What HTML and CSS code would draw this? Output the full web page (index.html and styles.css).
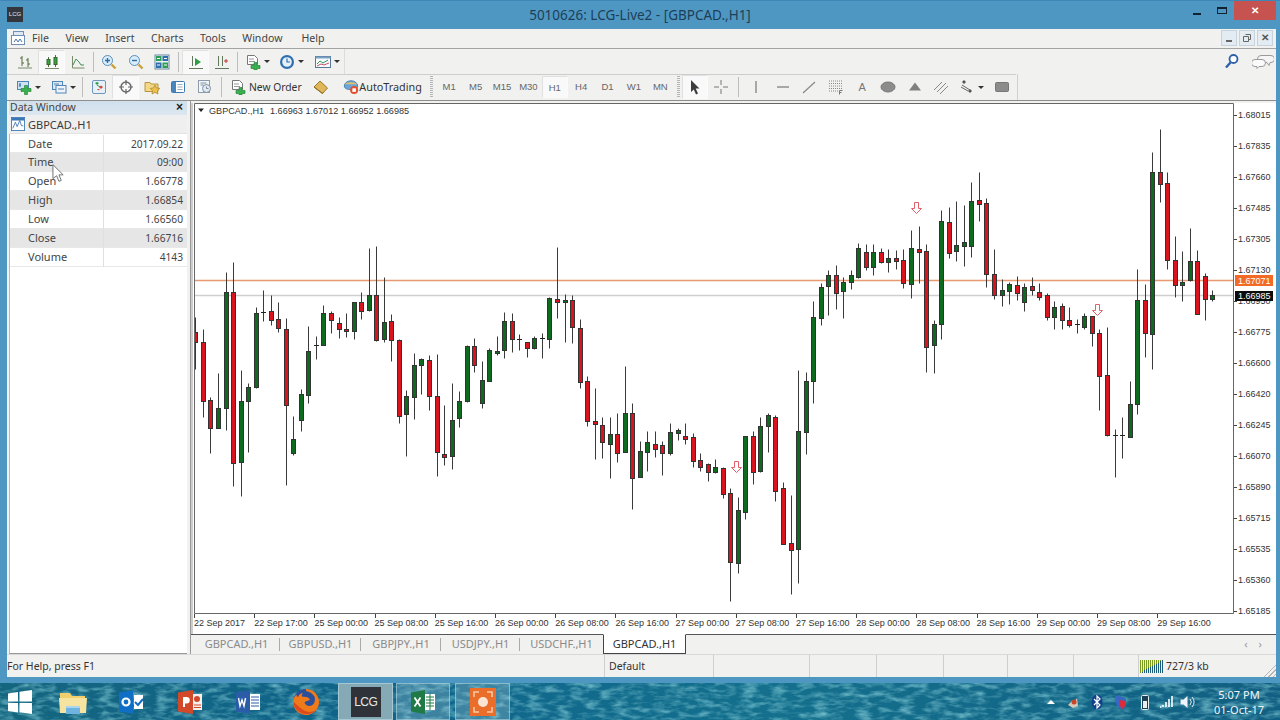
FILE: index.html
```html
<!DOCTYPE html>
<html lang="en">
<head>
<meta charset="utf-8">
<title>5010626: LCG-Live2 - [GBPCAD.,H1]</title>
<link rel="stylesheet" href="styles.css">
</head>
<body>
<div class="screen">
  <div class="window">
    <header class="titlebar">
      <span class="applogo">LCG</span>
      <span class="apptitle">5010626: LCG-Live2 - [GBPCAD.,H1]</span>
      <div class="winctl">
        <span class="wmin"></span>
        <span class="wmax"></span>
        <span class="wclose">✕</span>
      </div>
    </header>

    <nav class="menubar">
      <svg class="menuicon" viewBox="0 0 16 16"><rect x="3.5" y="1.5" width="10" height="8" fill="#dfe9f5" stroke="#6f8fb5"/><rect x="1.5" y="5.5" width="13" height="9" fill="#fff" stroke="#6f8fb5"/><path d="M4 12l2-3 2 3 2-3 2 3" fill="none" stroke="#4a76a8"/></svg>
      <span>File</span><span>View</span><span>Insert</span><span>Charts</span><span>Tools</span><span class="mwin">Window</span><span>Help</span>
      <div class="mdictl">
        <span class="mdi"><i class="mdimin"></i></span>
        <span class="mdi"><svg viewBox="0 0 10 10" width="10" height="10"><path d="M3.5 1.5h5v5h-2M1.5 3.5h5v5h-5z" fill="none" stroke="#666"/></svg></span>
        <span class="mdi mdix">✕</span>
      </div>
    </nav>

    <div class="tbrow tbrow1">
      <div class="tbgroup g1">
        <button class="tb"><svg viewBox="0 0 16 16"><path d="M1 14h14" stroke="#7a8a6a"/><path d="M5 2v10M3 4h2M5 9h2M11 4v9M9 6h2M11 10h2" stroke="#556b3a" fill="none"/></svg></button>
        <button class="tb on"><svg viewBox="0 0 16 16"><path d="M1 14.5h14" stroke="#7a8a6a"/><path d="M4.5 3v10M11.5 1v12" stroke="#556b3a"/><rect x="3" y="5.5" width="3" height="5" fill="#3da13d" stroke="#2c6b2c"/><rect x="10" y="3.5" width="3" height="7" fill="#3da13d" stroke="#2c6b2c"/></svg></button>
        <button class="tb"><svg viewBox="0 0 16 16"><path d="M2.5 2v12h12" stroke="#7a8a6a" fill="none"/><path d="M3 11l3-6 3 3 2 3h3" stroke="#3d8f55" fill="none"/></svg></button>
        <i class="sep"></i>
        <button class="tb"><svg viewBox="0 0 16 16"><circle cx="6.5" cy="6.5" r="5" fill="#d9ecfa" stroke="#5a8fb8"/><path d="M4 6.5h5M6.5 4v5" stroke="#2c6ea5" stroke-width="1.4"/><path d="M10.5 10.5l4 4" stroke="#c9a23c" stroke-width="2.4"/></svg></button>
        <button class="tb"><svg viewBox="0 0 16 16"><circle cx="6.5" cy="6.5" r="5" fill="#d9ecfa" stroke="#5a8fb8"/><path d="M4 6.5h5" stroke="#2c6ea5" stroke-width="1.4"/><path d="M10.5 10.5l4 4" stroke="#c9a23c" stroke-width="2.4"/></svg></button>
        <button class="tb"><svg viewBox="0 0 16 16"><rect x="1" y="1" width="14" height="14" fill="#eef4f4" stroke="#6a8aa0"/><rect x="2" y="2" width="5.500" height="5" fill="#2f9e58"/><rect x="8.500" y="2" width="5.500" height="5" fill="#2f6fae"/><rect x="2" y="8.500" width="5.500" height="5.500" fill="#2f6fae"/><rect x="8.500" y="8.500" width="5.500" height="5.500" fill="#2f9e58"/><path d="M3 4.500h3M10 4.500h3M3 11h3M10 11h3" stroke="#fff"/></svg></button>
        <i class="sep sepw"></i>
        <button class="tb on"><svg viewBox="0 0 16 16"><path d="M1 14.500h14M4.500 2v10" stroke="#63775a" fill="none"/><path d="M7 4l6 4-6 4z" fill="#2ea043"/></svg></button>
        <button class="tb"><svg viewBox="0 0 16 16"><path d="M1 14.500h14M4.500 2v10M8.500 2v10" stroke="#63775a" fill="none"/><path d="M10 7h4M12 5v4" stroke="#c0392b"/></svg></button>
        <i class="sep"></i>
        <button class="tb dd d34"><svg viewBox="0 0 16 16"><path d="M2.500 1.500h7l3 3v6h-10z" fill="#fff" stroke="#777"/><path d="M4 5h5M4 7.500h6" stroke="#999"/><path d="M9 8.500h3v3h3v3h-3v1.500h-3v-1.500h-3v-3h3z" fill="#37b24d" stroke="#1f7a30" stroke-width=".6"/></svg><b class="caret"></b></button>
        <button class="tb dd d36"><svg viewBox="0 0 16 16"><circle cx="8" cy="8" r="7" fill="#2e6fb0"/><circle cx="8" cy="8" r="4.800" fill="#e6f0f8"/><path d="M8 4.500v3.500h3" stroke="#2e6fb0" fill="none" stroke-width="1.200"/></svg><b class="caret"></b></button>
        <button class="tb dd d34"><svg viewBox="0 0 16 16"><rect x=".5" y="2.500" width="15" height="11" fill="#fafbfd" stroke="#557799"/><path d="M.5 2.500h15v2h-15z" fill="#7aa0c4"/><path d="M2 10l3-3 3 2 5-3" stroke="#2d9a5a" fill="none"/><path d="M2 12l4-2 3 1 5-2" stroke="#c0506a" fill="none"/></svg><b class="caret"></b></button>
      </div>
      <div class="tbright">
        <svg class="ic" viewBox="0 0 16 16"><circle cx="9.500" cy="6" r="4" fill="#fff" stroke="#2e62a8" stroke-width="1.800"/><path d="M6.500 9.500l-4.500 5" stroke="#2e62a8" stroke-width="2.400"/></svg>
        <svg class="chat" viewBox="0 0 22 16"><path d="M9 2.500h10a2 2 0 0 1 0 7h-1l-1 3-2-3H9a2 2 0 0 1 0-7z" fill="#f5f5f5" stroke="#9a9a9a"/><path d="M3 6.500h7a2 2 0 0 1 0 7H7l-2 2v-2H3a2 2 0 0 1 0-7z" fill="#fbfbfb" stroke="#9a9a9a"/></svg>
      </div>
    </div>

    <div class="tbrow tbrow2">
      <div class="tbgroup g2">
        <button class="tb dd d35"><svg viewBox="0 0 16 16"><rect x="1.500" y="2.500" width="11" height="8" fill="#cfe2f3" stroke="#4f86b8"/><path d="M3 6h2M4 4v4" stroke="#2c6ea5"/><path d="M8.500 6.500h3v3h3.500v3h-3.500v3h-3v-3h-3.500v-3h3.500z" fill="#37b24d" stroke="#1f7a30" stroke-width=".6"/></svg><b class="caret"></b></button>
        <button class="tb dd d34"><svg viewBox="0 0 16 16"><rect x="1.500" y="2.500" width="10" height="8" fill="#dce9f5" stroke="#4f86b8"/><rect x="5" y="6.500" width="10" height="7.500" fill="#eef4fb" stroke="#4f86b8"/><path d="M3 5h5M7 10h6" stroke="#5a7fa8"/></svg><b class="caret"></b></button>
        <i class="sep sepm"></i>
        <button class="tb"><svg viewBox="0 0 16 16"><rect x="1.500" y="1.500" width="13" height="13" rx="1.500" fill="#e7f0f8" stroke="#6f97bb"/><path d="M4 4l2 2 2-2-2-1z" fill="#2e9a45"/><path d="M8 8l2 2 2-2-2-1.500z" fill="#d24a3a"/><path d="M6 10l1.500 1.500L9 10z" fill="#d24a3a"/><path d="M6 6l3 2" stroke="#2e9a45"/></svg></button>
        <button class="tb on"><svg viewBox="0 0 16 16"><circle cx="8" cy="8" r="5" fill="none" stroke="#666" stroke-width="1.400"/><path d="M8 1v5M8 10v5M1 8h5M10 8h5" stroke="#666" stroke-width="1.200"/></svg></button>
        <button class="tb"><svg viewBox="0 0 16 16"><path d="M1 3.500h5l1 1.500h7v7.500h-13z" fill="#f3d785" stroke="#b8963f"/><path d="M11 6l1.500 3 3.300.400-2.400 2.300.600 3.300-3-1.600-3 1.600.600-3.300L6.200 9.400l3.300-.4z" fill="#eec24a" stroke="#a68430" stroke-width=".7"/></svg></button>
        <button class="tb"><svg viewBox="0 0 16 16"><rect x="1.500" y="2.500" width="13" height="11" rx="1" fill="#fff" stroke="#3f78ad"/><rect x="2" y="3" width="4" height="10" fill="#4a85bd"/><path d="M7.500 5.500h5M7.500 8h5M7.500 10.500h5" stroke="#9ab"/></svg></button>
        <button class="tb"><svg viewBox="0 0 16 16"><rect x="1.500" y="1.500" width="11" height="12" fill="#f4f7fa" stroke="#8a9bad"/><circle cx="9.500" cy="9.500" r="4" fill="#dfeaf3" stroke="#7f8f9f"/><path d="M9.500 7.500v2h2M3.500 4h6M3.500 6h3" stroke="#7f8f9f" fill="none"/></svg></button>
        <i class="sep sepw"></i>
        <button class="tb tbtext nom"><svg viewBox="0 0 16 16"><path d="M2.500 1.500h7l3 3v6h-10z" fill="#fff" stroke="#777"/><path d="M4 5h5M4 7.500h6" stroke="#999"/><path d="M9 8.500h3v3h3v3h-3v1.500h-3v-1.500h-3v-3h3z" fill="#37b24d" stroke="#1f7a30" stroke-width=".6"/></svg><span>New Order</span></button>
        <button class="tb"><svg viewBox="0 0 16 16"><path d="M7 2l7.500 7-5 5.500L1 8z" fill="#e0b65a" stroke="#9a7a2c"/><path d="M1 8l8.500 6.500 1-1.500" fill="none" stroke="#8a6a20"/></svg></button>
        <button class="tb tbtext auto"><svg viewBox="0 0 18 18"><path d="M1.500 8a7.500 6 0 0 1 15 0c0 3-4 4-7.500 4S1.500 11 1.500 8z" fill="#6aa6d8" stroke="#3f78ad"/><path d="M2 6c2-3 12-3 14 0" fill="#e7c265"/><circle cx="12.500" cy="12.500" r="4.500" fill="#e0512f"/><rect x="10.500" y="10.500" width="4" height="4" fill="#fff"/></svg><span>AutoTrading</span></button>
      </div>
      <i class="grip"></i>
      <div class="tfs">
        <button class="tf">M1</button><button class="tf">M5</button><button class="tf">M15</button><button class="tf">M30</button><button class="tf on">H1</button><button class="tf">H4</button><button class="tf">D1</button><button class="tf">W1</button><button class="tf">MN</button>
      </div>
      <i class="grip gripb"></i>
      <div class="tools">
        <button class="tb on"><svg viewBox="0 0 16 16"><path d="M4 1l8.500 8.500H8.700L11 14.500 9 15.500 6.800 10.500 4 13z" fill="#3c3c3c"/></svg></button>
        <button class="tb"><svg viewBox="0 0 16 16"><path d="M8 1v5M8 10v5M1 8h5M10 8h5" stroke="#777"/></svg></button>
        <i class="sep sept"></i>
        <button class="tb"><svg viewBox="0 0 16 16"><path d="M8 2v12" stroke="#888" stroke-width="1.400"/></svg></button>
        <button class="tb"><svg viewBox="0 0 16 16"><path d="M2 8h12" stroke="#888" stroke-width="1.400"/></svg></button>
        <button class="tb"><svg viewBox="0 0 16 16"><path d="M2 14L14 3" stroke="#888" stroke-width="1.200"/></svg></button>
        <button class="tb"><svg viewBox="0 0 16 16"><path d="M1 2h13M1 4.500h13M1 7h13M1 9.500h13M1 12h9" stroke="#888" stroke-dasharray="1 1"/><path d="M11.500 11.500h3M11.500 11.500v4M11.500 13.500h2" stroke="#777" fill="none"/></svg></button>
        <button class="tb"><span class="alabel">A</span></button>
        <button class="tb"><svg viewBox="0 0 16 16"><ellipse cx="8" cy="8" rx="7" ry="5" fill="#8c8c8c" stroke="#777"/></svg></button>
        <button class="tb"><svg viewBox="0 0 16 16"><path d="M8 3.500l6 8H2z" fill="#808080"/></svg></button>
        <button class="tb"><svg viewBox="0 0 16 16"><path d="M1 11l8-8M4 13l9-9M7 15l8-8" stroke="#888" fill="none"/></svg></button>
        <button class="tb dd d34"><svg viewBox="0 0 16 16"><path d="M5 1l2 2-2 2-2-2zM11 10l2 2-2 2-2-2z" fill="#555"/><path d="M3 6l8 5M2 8l7 4" stroke="#666"/></svg><b class="caret"></b></button>
        <button class="tb"><svg viewBox="0 0 16 16"><rect x="1.500" y="3.500" width="13" height="9" rx="1" fill="#8c8c8c" stroke="#777"/></svg></button>
      </div>
    </div>

    <main class="work">
      <aside class="datawin">
        <div class="dwhead"><span>Data Window</span><b>×</b></div>
        <div class="dwsym">
          <svg class="dwicon" viewBox="0 0 16 16"><rect x=".5" y=".5" width="15" height="15" fill="#fff" stroke="#3b76b5"/><rect x="1" y="1" width="14" height="3" fill="#3b76b5"/><path d="M2 13l3-7 2 5 3-7 2 6h2" fill="none" stroke="#3b76b5"/></svg>
          <span>GBPCAD.,H1</span>
        </div>
        <div class="dwlist">
          <div class="dwrow"><span>Date</span><span>2017.09.22</span></div>
          <div class="dwrow alt"><span>Time</span><span>09:00</span></div>
          <div class="dwrow"><span>Open</span><span>1.66778</span></div>
          <div class="dwrow alt"><span>High</span><span>1.66854</span></div>
          <div class="dwrow"><span>Low</span><span>1.66560</span></div>
          <div class="dwrow alt"><span>Close</span><span>1.66716</span></div>
          <div class="dwrow"><span>Volume</span><span>4143</span></div>
        </div>
      </aside>
      <section class="chartcol">
        <div class="chartbox" id="chart"></div>
        <div class="tabs">
          <span class="tab sepd w1">GBPCAD.,H1</span>
          <span class="tab sepd w2">GBPUSD.,H1</span>
          <span class="tab sepd w3">GBPJPY.,H1</span>
          <span class="tab sepd w4">USDJPY.,H1</span>
          <span class="tab w5">USDCHF.,H1</span>
          <span class="tab active">GBPCAD.,H1</span>
          <span class="tabnav">‹&emsp;›</span>
        </div>
      </section>
    </main>

    <footer class="status">
      <span class="st st1">For Help, press F1</span>
      <span class="st st2">Default</span>
      <span class="st st3"></span>
      <span class="st st4"></span>
      <span class="st st5"></span>
      <span class="st st6"></span>
      <span class="st st7"></span>
      <span class="st st8"></span>
      <span class="st st9"><i class="conn"></i>727/3 kb</span>
      <i class="sizegrip"></i>
    </footer>
  </div>

  <div class="taskbar">
    <svg class="wallpaper" width="1280" height="37"><filter id="mottle" x="0" y="0" width="100%" height="100%"><feTurbulence type="fractalNoise" baseFrequency=".07 .2" numOctaves="3" seed="4"/><feColorMatrix values="0 0 0 0 .2  0 0 0 0 .56  0 0 0 0 .64  0 0 0 1.700 -.7"/></filter><rect width="1280" height="37" filter="url(#mottle)"/></svg>
    <div class="tasks">
      <span class="task"><svg viewBox="0 0 26 26" class="ti"><path d="M1 4.500l10-1.500v9.500H1zM12.500 2.800L25 1v11.500H12.500zM1 14h10v9.500L1 22zM12.500 14H25v11l-12.500-1.800z" fill="#fff"/></svg></span>
      <span class="task"><svg viewBox="0 0 30 30" class="ti big"><path d="M2 6h10l2 3h13v4H2z" fill="#f2cf6a"/><path d="M1 11h28l-1 15H2z" fill="#f7e3a0"/><path d="M8 19h14v8H8z" fill="#6fb3e0"/><path d="M8 19h14v2H8z" fill="#a9d5f0"/></svg></span>
      <span class="task"><svg viewBox="0 0 26 26" class="ti"><path d="M1 3.500l14-2v23l-14-2z" fill="#0f6fc6"/><circle cx="8" cy="13" r="3.500" fill="none" stroke="#fff" stroke-width="2.200"/><path d="M16 6h9v14h-9z" fill="#fff"/><path d="M17 13l3 3 5-6" fill="none" stroke="#0f6fc6" stroke-width="2"/></svg></span>
      <span class="task"><svg viewBox="0 0 26 26" class="ti"><path d="M1 3.500l15-2.500v24l-15-2.500z" fill="#d2492a"/><path d="M6 18V8h3.500a3 3 0 0 1 0 6.500H8V18z" fill="#fff"/><path d="M16 5h9v16h-9z" fill="#f7f0ec"/><circle cx="20" cy="10" r="3" fill="#d2492a"/><path d="M17 16h7M17 18.500h7" stroke="#d2492a"/></svg></span>
      <span class="task"><svg viewBox="0 0 26 26" class="ti"><path d="M1 3.500l14-2.500v24l-14-2.500z" fill="#2b5ca8"/><path d="M3.500 9l1.500 8 2-6 2 6 1.500-8" fill="none" stroke="#fff" stroke-width="1.400"/><path d="M15 5h10v16H15z" fill="#fff"/><path d="M16 8h8M16 11h8M16 14h8M16 17h8" stroke="#2b5ca8"/></svg></span>
      <span class="task"><svg viewBox="0 0 30 30" class="ti big"><circle cx="15" cy="15" r="13" fill="#2b4f9a"/><path d="M15 2a13 13 0 1 1-12.500 9.500c1-2 2-3 3-4 0 1.500.5 2 1.500 2.500 1-2.500 3-4 5-4-1 1-1.500 2-1 3.500 3 .5 6 0 8 3-2 2-4 1-5.500 3 1 3 4 4 7 3 3-1.500 4-5 3-9-2-3-5-5-8.500-5.500z" fill="#ef7a1a"/><path d="M2.500 15a13 13 0 0 0 22 8.500c-4 2-9 2-13-1s-6-5-9-7.500z" fill="#dc4a1f"/></svg></span>
      <span class="task taskon"><span class="lcg">LCG</span></span>
      <span class="task taskbox tx"><svg viewBox="0 0 26 26" class="ti"><path d="M1 3.500l14-2.500v24l-14-2.500z" fill="#1f7a45"/><path d="M4.500 8.500l6 9M10.500 8.500l-6 9" stroke="#fff" stroke-width="1.800"/><path d="M15 5h10v16H15z" fill="#fff"/><path d="M16 8h8M16 11h8M16 14h8M16 17h8M20 5v16" stroke="#1f7a45"/></svg></span>
      <span class="task taskbox to"><svg viewBox="0 0 30 30" class="ti big"><rect x="2" y="1" width="26" height="28" fill="#ea6d2a"/><circle cx="15" cy="15" r="5" fill="#f9e4d3"/><path d="M6 10V5h5M19 5h5v5M24 20v5h-5M11 25H6v-5" fill="none" stroke="#f6c9a6" stroke-width="1.600"/></svg></span>
    </div>
    <div class="tray">
      <b class="trayup"></b>
      <svg class="tr" viewBox="0 0 16 16"><path d="M3 11l4-4 2 2 3-5 1 8-5 2z" fill="#d6c9b8"/><circle cx="9" cy="8" r="2.500" fill="#c8452c"/></svg>
      <svg class="tr" viewBox="0 0 16 16"><ellipse cx="8" cy="8" rx="5.500" ry="7.500" fill="#10418a"/><path d="M5 5l6 6-3 3V2l3 3-6 6" fill="none" stroke="#fff" stroke-width="1.200"/></svg>
      <svg class="tr" viewBox="0 0 16 16"><path d="M2 2l5-1 1 2 5 2c0 6-1 9-5 10-4-2-6-6-6-13z" fill="#3a66c4"/><path d="M6 6l7 1c0 5-2 7-4 8-2-2-3-5-3-9z" fill="#d92d3c"/></svg>
      <svg class="tr tn" viewBox="0 0 16 16"><rect x="4.500" y="1.500" width="7" height="14" rx="1" fill="#1c3f55" stroke="#e6eef2"/><rect x="6" y="7" width="4" height="7" fill="#e6eef2"/></svg>
      <svg class="tr tn" viewBox="0 0 16 16"><path d="M2 13h1.500M5 13v-2M8 13V8M11 13V5M14 13V2" stroke="#fff" stroke-width="1.600"/></svg>
      <svg class="tr tl" viewBox="0 0 16 16"><path d="M1.500 5.500h3l4-3.500v12l-4-3.500h-3z" fill="#eef4f7"/><path d="M11 5a4.500 4.500 0 0 1 0 6M13 3a7 7 0 0 1 0 10" fill="none" stroke="#e6eef2"/></svg>
      <div class="clock"><span>5:07 PM</span><span>01-Oct-17</span></div>
    </div>
  </div>

  <svg class="cursor" viewBox="0 0 14 20"><path d="M1 1l11 11H7.500l2.500 6-2.500 1-2.500-6L1 16z" fill="#fff" stroke="#6a6a6a"/></svg>
</div>
<script src="chart.js"></script>
</body>
</html>
```
FILE: styles.css
```css
* { box-sizing: border-box; }
html, body { margin: 0; padding: 0; }
body { width: 1280px; height: 720px; overflow: hidden; font-family: "Noto Sans", "Liberation Sans", sans-serif; color: #333; }
.screen { position: relative; width: 1280px; height: 720px; display: flex; flex-direction: column; background: #14708f; overflow: hidden; }
i, b { font-style: normal; }
button { border: 0; background: none; padding: 0; font: inherit; color: inherit; }

.window { height: 683px; display: flex; flex-direction: column; background: #4f97c3; padding: 0 4px 6px 7px; border-top: 1px solid #3f86b6; flex: none; }
.titlebar { height: 28px; flex: none; position: relative; display: flex; align-items: center; justify-content: center; margin-left: -7px; margin-right: -4px; }
.applogo { position: absolute; left: 7px; top: 6px; width: 16px; height: 15px; background: #33373d; color: #e8e8e8; font: 6px/15px "Liberation Sans", sans-serif; text-align: center; }
.apptitle { font: 13.500px/28px "Noto Sans", sans-serif; color: #1d3f58; }
.winctl { position: absolute; right: 4px; top: 0; height: 19px; display: flex; align-items: center; }
.wmin { width: 8px; height: 2px; background: #12222e; margin-right: 16px; margin-top: 6px; }
.wmax { width: 10px; height: 7px; border: 1px solid #12222e; border-top-width: 2px; margin-right: 7px; }
.wclose { width: 42px; height: 19px; background: #c75350; color: #fff; font: bold 10px/19px "Liberation Sans", sans-serif; text-align: center; }

.menubar { height: 19px; flex: none; background: #f1f1f0; display: flex; align-items: center; position: relative; font: 10.600px/17px "Noto Sans", sans-serif; color: #444; padding: 0 0 1px 3px; }
.menuicon { width: 16px; height: 16px; margin-right: 6px; }
.menubar > span { margin-right: 16.500px; }
.menubar > .mwin { margin-right: 19px; }
.mdictl { position: absolute; right: 3px; top: 1px; display: flex; gap: 2px; }
.mdi { width: 16px; height: 16px; background: #e3ecf3; border: 1px solid #c6d3de; display: flex; align-items: center; justify-content: center; font: bold 10px/14px "Liberation Sans", sans-serif; color: #555; }
.mdimin { width: 6px; height: 2px; background: #666; margin-top: 6px; }

.tbrow { flex: none; background: #f1f1f0; display: flex; align-items: center; }
.tbrow1 { height: 26px; border-top: 1px solid #a3a3a3; position: relative; }
.tbrow2 { height: 27px; border-bottom: 1px solid #8e8e8e; background: linear-gradient(#cdcdcd, #cdcdcd) 0 0 / 1009px 1px no-repeat, #f1f1f0; }
.tbgroup { display: flex; align-items: center; height: 100%; }
.g1 { width: 338px; padding-left: 5px; border-right: 1px solid #dcdcdc; }
.g2 { padding-left: 4px; width: 421px; }
.tb { width: 26.400px; height: 24px; flex: none; display: flex; align-items: center; justify-content: center; }
.tb svg { width: 16px; height: 16px; display: block; }
.tb.on { background: #f9f9f9; border: 1px solid #e0e0e0; border-right-color: #fbfbfb; border-bottom-color: #fbfbfb; }
.dd { justify-content: flex-start; padding-left: 5px; gap: 3px; }
.d34 { width: 34px; }
.d35 { width: 35px; }
.d36 { width: 36px; }
.caret { width: 0; height: 0; border: 3px solid transparent; border-top-color: #333; border-bottom: 0; }
.sep { width: 1px; height: 20px; background: #bdbdbd; flex: none; margin: 0 2px 0 2px; }
.sepw { margin-left: 3px; margin-right: 3px; }
.sepm { margin-left: 2px; margin-right: 3px; }
.sept { margin-left: 4px; margin-right: 4px; }
.tbtext { justify-content: flex-start; gap: 3px; padding-left: 5px; font: 10.300px/24px "Noto Sans", sans-serif; color: #333; white-space: nowrap; }
.nom { width: 83px; }
.auto { width: 90px; margin-left: 4px; gap: 0; font-size: 10.800px; }
.tbright { position: absolute; right: 2px; top: 4px; display: flex; align-items: center; gap: 12px; }
.ic { width: 16px; height: 16px; }
.chat { width: 22px; height: 16px; }
.grip { width: 3px; height: 22px; margin: 0 3px 0 2px; flex: none; background: repeating-linear-gradient(#b5b5b5 0 1px, transparent 1px 2px); }
.gripb { margin-left: 3px; margin-right: 2px; }
.tfs { display: flex; align-items: center; }
.tf { width: 26.400px; height: 22px; font: 9.500px/22px "Liberation Sans", sans-serif; color: #666; text-align: center; padding: 0; }
.tf.on { background: #f9f9f9; border: 1px solid #e0e0e0; border-right-color: #fbfbfb; border-bottom-color: #fbfbfb; }
.tools { display: flex; align-items: center; height: 100%; border-right: 1px solid #d0d0d0; padding-right: 2px; }
.alabel { font: 11px/16px "Liberation Sans", sans-serif; color: #777; }

.work { flex: 1; display: flex; min-height: 0; }
.datawin { width: 184px; flex: none; background: #f1f1f0; padding: 0 3px 0 2px; display: flex; flex-direction: column; border-right: 1px solid #9a9a9a; }
.dwhead { height: 14px; flex: none; background: linear-gradient(#cfdfec, #dce7f0); display: flex; justify-content: space-between; align-items: center; padding: 0 4px 1px 1px; font: 10.500px/13px "Noto Sans", sans-serif; color: #444; }
.dwhead b { font: bold 12px/13px "Liberation Sans", sans-serif; color: #222; }
.dwsym { height: 19px; flex: none; display: flex; align-items: center; gap: 3px; padding-left: 2px; background: #efefef; font: 11px/19px "Noto Sans", sans-serif; color: #3a3a3a; border-bottom: 1px solid #e3e3e3; }
.dwicon { width: 14px; height: 14px; }
.dwlist { flex: 1; background: #fff; border-bottom: 1px solid #999; border-left: 1px solid #bbb; padding-top: .5px; }
.dwrow { height: 18.900px; display: grid; grid-template-columns: 94px 1fr; font: 11px/18.900px "Noto Sans", sans-serif; color: #444; border-bottom: 1px solid #e8e8e8; }
.dwrow.alt { background: #e6e6e6; }
.dwrow span:first-child { padding-left: 18px; border-right: 1px solid #e0e0e0; }
.dwrow span:last-child { text-align: right; padding-right: 4px; font-size: 10.200px; }

.chartcol { flex: 1; min-width: 0; display: flex; flex-direction: column; padding-top: 2px; background: #f1f1f0; }
.chartbox { flex: 1; min-height: 0; background: #fff; }
.chartbox svg { display: block; width: 100%; height: 100%; }
.chartbox text { font: 9px "Liberation Sans", sans-serif; fill: #333; }
.chartbox .lbl { fill: #fff; }
.chartbox .head { font-size: 9.100px; }
.tabs { height: 20px; flex: none; display: flex; align-items: stretch; background: #f1f1f0; border-top: 1px solid #555; position: relative; font: 11px/17px "Noto Sans", sans-serif; color: #8a8a8a; }
.tab { text-align: center; flex: none; position: relative; white-space: nowrap; }
.w1 { width: 89px; padding-left: 2px; }
.w2 { width: 81px; }
.w3 { width: 80px; }
.w4 { width: 79px; }
.w5 { width: 83px; }
.sepd::after { content: ""; position: absolute; right: 0; top: 3px; bottom: 3px; width: 1px; background: #aaa; }
.tab.active { width: 83px; background: #fff; color: #333; border: 1px solid #444; margin-top: -1px; border-top: 1px solid #fff; }
.tabnav { position: absolute; right: 14px; top: 0; color: #999; font-size: 11px; }

.status { height: 23px; flex: none; display: flex; background: #f1f1f0; border-top: 1px solid #d8d8d8; position: relative; font: 10.500px/22px "Noto Sans", sans-serif; color: #333; }
.st { flex: none; border-left: 1px solid #cfcfcf; height: 100%; padding-left: 4px; white-space: nowrap; }
.st1 { width: 597px; border-left: 0; padding-left: 0; }
.st2 { width: 109px; }
.st3 { width: 96px; }
.st4 { width: 67px; }
.st5 { width: 67px; }
.st6 { width: 64px; }
.st7 { width: 66px; }
.st8 { width: 65px; }
.st9 { width: 130px; display: flex; align-items: center; gap: 3px; padding-left: 1px; }
.conn { width: 23px; height: 13px; flex: none; background: repeating-linear-gradient(90deg, transparent 0 1px, #f1f1f0 1px 2px), linear-gradient(to bottom right, #7a9a1e 50%, #1c5a7a 50%); }
.sizegrip { position: absolute; right: 0; bottom: 0; width: 14px; height: 14px; background: repeating-linear-gradient(135deg, transparent 0 2px, #b5b5b5 2px 3px); clip-path: polygon(100% 0, 100% 100%, 0 100%); }

.taskbar { flex: 1; position: relative; display: flex; justify-content: space-between; align-items: center; background: linear-gradient(90deg, #14657f, #0f648a 30%, #14708d 60%, #115f82); }
.wallpaper { position: absolute; left: 0; top: 0; }
.tasks { position: relative; display: flex; align-items: center; height: 100%; }
.task { width: 58.250px; height: 100%; display: flex; align-items: center; justify-content: center; flex: none; }
.task:first-child { width: 40px; margin-right: 4px; }
.ti { width: 26px; height: 26px; }
.big { width: 30px; height: 30px; }
.taskon { width: 55px; background: #86a9b6; border: 1px solid #a6c8d3; margin-left: 3px; }
.taskbox { background: rgba(180, 210, 220, .28); border: 1px solid rgba(190, 220, 230, .55); }
.tx { width: 54px; margin-left: 3px; }
.to { width: 55px; margin-left: 5px; }
.lcg { width: 30px; height: 30px; background: #2f3339; color: #e8e8e8; font: 12px/30px "Liberation Sans", sans-serif; text-align: center; letter-spacing: -.5px; }
.tray { position: relative; display: flex; align-items: center; height: 100%; padding-right: 11px; color: #f0f6f8; }
.trayup { width: 0; height: 0; border: 4px solid transparent; border-bottom-color: #fff; border-top: 0; margin-right: 10px; }
.tr { width: 16px; height: 16px; margin-right: 8px; flex: none; }
.tn { margin-right: 5px; }
.tl { margin-right: 14px; }
.clock { width: 60px; display: flex; flex-direction: column; align-items: center; font: 11px/15px "Noto Sans", sans-serif; white-space: nowrap; }

.cursor { position: absolute; left: 52px; top: 163px; width: 13px; height: 20px; }
```
FILE: chart.js
```js
// Candles as read off the chart: [x, wickTop, bodyTop, bodyBottom, wickBottom, colour].
var groups = [
  { ox: 190, oy: 240, c: [
    [15,232,275,305,388,'r'],[39,268,305,482,532,'r'],[61,472,481,563,640,'r'],[84,398,503,563,565,'g'],
    [107,97,157,503,570,'g'],[129,65,157,670,738,'r'],[152,390,484,665,767,'g'],[175,428,441,484,637,'g'],
    [197,200,218,440,445,'g'],[220,150,215,218,242,'d'],[242,165,213,239,256,'r'],[265,187,238,264,276,'r'],
    [288,235,267,495,735,'r'],[310,528,597,640,645,'g'],[333,448,463,541,572,'g'],[355,257,332,464,490,'g'],
    [378,288,315,318,358,'d'],[400,195,218,315,315,'g'],[423,212,218,241,280,'r'],[446,232,250,266,293,'r'],
    [468,220,266,272,290,'r'],[491,187,187,272,298,'g'],[514,155,187,214,236,'r'],[536,25,165,210,212,'g'],
    [558,17,165,299,302,'r'],[581,112,246,298,306,'g'],[604,222,244,301,363,'r'],[627,298,300,527,550,'r'],
    [649,450,469,523,648,'g'],[671,338,376,470,538,'g'],[694,355,356,374,463,'g'],[717,345,360,467,510,'r'],
    [740,342,467,636,707,'r'],[762,494,642,652,674,'r'],[785,430,540,648,688,'g'],[807,452,484,535,562,'g'],
    [830,316,317,484,485,'g'],[852,294,317,376,397,'r'],[875,362,421,490,505,'g'],[898,325,331,423,423,'g'],
    [920,289,332,339,345,'g'],[943,215,243,331,355,'g']
  ]},
  { ox: 510, oy: 240, c: [
    [5,220,244,298,335,'r'],[28,282,297,300,330,'d'],[50,307,307,323,350,'r'],[73,288,295,324,328,'g'],
    [96,280,294,298,355,'d'],[118,172,173,298,325,'g'],[141,20,176,186,235,'r'],[164,162,179,185,305,'g'],
    [186,165,181,262,310,'r'],[209,238,263,427,445,'r'],[231,407,424,544,558,'r'],[254,445,542,552,657,'r'],
    [276,532,554,606,655,'r'],[299,530,582,612,715,'g'],[321,520,582,640,666,'r'],[344,378,520,636,637,'g'],
    [367,488,520,714,806,'r'],[389,602,633,711,711,'g'],[412,572,607,636,692,'g'],[435,573,611,626,652,'r'],
    [457,602,616,640,705,'r'],[480,550,576,640,644,'g'],[503,565,570,580,600,'g'],[525,548,588,598,612,'r'],
    [548,580,590,662,680,'r'],[570,638,661,682,693,'r'],[593,670,672,696,722,'r'],[616,658,681,696,698,'g'],
    [638,680,684,762,773,'r'],[661,743,760,967,1083,'r'],[684,770,811,970,998,'g'],[706,587,588,815,838,'g'],
    [729,573,588,696,733,'r'],[751,530,557,693,695,'g'],[774,518,525,557,635,'g'],[796,525,531,752,783,'r'],
    [819,727,743,911,912,'r'],[842,765,910,931,1063,'r'],[864,390,574,927,1030,'g'],[887,395,422,575,643,'g'],
    [909,183,230,423,490,'g'],[932,128,140,233,256,'g']
  ]},
  { ox: 820, oy: 170, c: [
    [24,300,315,347,435,'g'],[47,285,316,370,418,'r'],[70,320,336,362,443,'g'],[93,300,316,335,357,'g'],
    [115,218,234,322,325,'g'],[137,222,245,291,300,'r'],[160,222,245,291,314,'g'],[183,235,245,275,278,'r'],
    [205,238,264,277,305,'g'],[228,240,264,272,298,'r'],[250,238,270,340,353,'r'],[273,180,234,342,385,'g'],
    [296,168,236,246,338,'r'],[319,222,242,531,605,'r'],[341,450,462,525,610,'g'],[364,120,152,463,508,'g'],
    [386,112,155,248,265,'r'],[409,92,225,243,272,'g'],[432,105,216,227,287,'g'],[454,36,92,227,262,'g'],
    [477,7,90,102,153,'r'],[499,85,100,313,350,'r'],[522,238,312,375,387,'r'],[545,326,361,375,407,'g'],
    [567,335,343,362,402,'g'],[590,318,344,368,390,'r'],[612,340,352,396,422,'g'],[635,320,349,361,376,'r'],
    [658,340,366,380,390,'r'],[680,370,375,440,450,'r'],[703,392,411,441,476,'g'],[725,400,408,450,478,'r'],
    [748,412,451,464,472,'r'],[771,446,462,466,488,'d'],[793,428,439,470,478,'g'],[816,438,439,489,527,'r'],
    [838,476,488,618,720,'r'],[861,470,615,796,798,'r'],[884,778,796,800,920,'d'],[907,740,796,800,864,'d'],
    [929,633,702,800,800,'g'],[952,297,389,703,733,'g'],[974,343,389,488,560,'r'],[997,-54,5,491,597,'g'],
    [1019,-123,6,42,95,'r'],[1042,5,40,271,298,'r'],[1064,198,270,345,382,'r'],[1087,242,336,344,394,'g'],
    [1110,173,273,330,333,'g'],[1132,240,274,432,432,'r'],[1155,308,318,386,450,'r'],[1177,360,374,387,393,'g']
  ]}
];

var yLabels = [['1.68015',115],['1.67835',146],['1.67660',177],['1.67485',208],['1.67305',239],['1.67130',270],
  ['1.66950',301],['1.66775',332],['1.66600',363],['1.66420',394],['1.66245',425],['1.66070',456],['1.65890',487],
  ['1.65715',518],['1.65535',549],['1.65360',580],['1.65185',611]];
var xLabels = ['22 Sep 2017','22 Sep 17:00','25 Sep 00:00','25 Sep 08:00','25 Sep 16:00','26 Sep 00:00','26 Sep 08:00',
  '26 Sep 16:00','27 Sep 00:00','27 Sep 08:00','27 Sep 16:00','28 Sep 00:00','28 Sep 08:00','28 Sep 16:00',
  '29 Sep 00:00','29 Sep 08:00','29 Sep 16:00'];

function snap(v) { return Math.round(v) + 0.5; }
var out = [];

// horizontal price lines
out.push('<path d="M195 280.500H1234" stroke="#e79a72" stroke-width="1.600"/>');
out.push('<path d="M195 295.500H1234" stroke="#cfcfcf" stroke-width="1.400"/>');

// candles
groups.forEach(function (g) {
  g.c.forEach(function (d) {
    var x = snap(g.ox + d[0] / 3);
    var top = snap(g.oy + d[1] / 3), bt = snap(g.oy + d[2] / 3), bb = snap(g.oy + d[3] / 3), bot = snap(g.oy + d[4] / 3);
    out.push('<path d="M' + x + ' ' + top + 'V' + bot + '" stroke="#3a3a3a"/>');
    if (d[5] === 'd') {
      out.push('<path d="M' + (x - 2.5) + ' ' + bt + 'h5" stroke="#222"/>');
    } else {
      var fill = d[5] === 'g' ? '#0e6a1e' : '#d9141e';
      out.push('<rect x="' + (x - 2) + '" y="' + bt + '" width="4" height="' + Math.max(bb - bt, 1) + '" fill="' + fill + '" stroke="#333"/>');
    }
  });
});

// frame of the plot, over the candles so that the first one is cut at the edge
out.push('<rect x="191" y="103" width="4" height="531" fill="#fff"/>');
out.push('<path d="M194.5 103.5H1233.500V613.500H194.500Z" fill="none" stroke="#666"/>');
out.push('<path d="M192 103V634" stroke="#999"/>');

// sell arrows
[[916, 208], [736, 467], [1097, 310]].forEach(function (a) {
  var x = a[0] + 0.5, y = a[1] - 5.5;
  out.push('<path d="M' + (x - 2) + ' ' + y + 'h4v6h3l-5 5-5-5h3z" fill="#fff" stroke="#e0616a"/>');
});

// axes
yLabels.forEach(function (l) {
  out.push('<path d="M1234 ' + (l[1] + 0.5) + 'h3" stroke="#444"/>');
  out.push('<text x="1238" y="' + (l[1] + 3) + '">' + l[0] + '</text>');
});
xLabels.forEach(function (t, i) {
  var x = 194 + i * 60.2;
  out.push('<path d="M' + (Math.round(x) + 0.5) + ' 614v4" stroke="#444"/>');
  out.push('<text x="' + x + '" y="626">' + t + '</text>');
});

// current price tags
out.push('<rect x="1235" y="275" width="38" height="11" fill="#f26a26"/>');
out.push('<text class="lbl" x="1238" y="284">1.67071</text>');
out.push('<rect x="1235" y="291" width="38" height="10" fill="#0c0c0c"/>');
out.push('<text class="lbl" x="1238" y="299">1.66985</text>');

// header
out.push('<path d="M198 108.500h6l-3 3.500z" fill="#222"/>');
out.push('<text class="head" x="209" y="114">GBPCAD.,H1</text>');
out.push('<text class="head" x="270" y="114">1.66963 1.67012 1.66952 1.66985</text>');

document.getElementById('chart').innerHTML =
  '<svg xmlns="http://www.w3.org/2000/svg" viewBox="191 103 1085 531" preserveAspectRatio="none">' + out.join('') + '</svg>';
```
